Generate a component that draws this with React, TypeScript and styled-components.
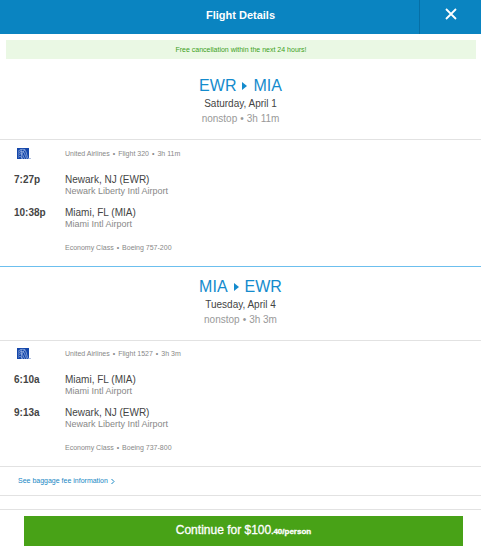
import React from 'react';
import styled, { createGlobalStyle } from 'styled-components';

const GlobalStyle = createGlobalStyle`
  *, *::before, *::after { box-sizing: border-box; }
  body {
    margin: 0;
    background: #fff;
    color: #444;
    font-family: "Liberation Sans", Arial, sans-serif;
  }
  h1, h2, p { margin: 0; font-weight: 400; }
`;

const Header = styled.header`
  display: grid;
  grid-template-columns: 62px 1fr 62px;
  height: 34px;
  background: #0a84c1;
  color: #fff;
`;

const HeaderTitle = styled.h1`
  && { font-weight: 700; }
  grid-column: 2;
  font-size: 11px;
  line-height: 30px;
  text-align: center;
`;

const CloseButton = styled.button`
  display: flex;
  align-items: center;
  justify-content: center;
  padding: 0 0 7px 0;
  border: 0;
  border-left: 1px solid #066fa6;
  background: transparent;
  color: inherit;
  cursor: pointer;
`;

const Notice = styled.p`
  margin: 6px 5px 0 6px;
  background: #eaf8e4;
  color: #3c9f1b;
  font-size: 7px;
  line-height: 19px;
  text-align: center;
`;

const Trip = styled.section<{ $divided?: boolean }>`
  border-top: ${(p) => (p.$divided ? '1px solid #6cbfee' : '0')};
  padding-top: ${(p) => (p.$divided ? '10px' : '17px')};
`;

const Summary = styled.div`
  display: flex;
  flex-direction: column;
  align-items: center;
  height: 64px;
  border-bottom: 1px solid #e2e2e2;
`;

const Route = styled.h2`
  display: flex;
  align-items: center;
  gap: 6px;
  color: #148bcd;
  font-size: 16px;
  line-height: 20px;
`;

const TripDate = styled.p`
  color: #444;
  font-size: 10px;
  line-height: 15px;
`;

const Facts = styled.p`
  display: flex;
  gap: 3px;
`;

const Duration = styled(Facts)`
  color: #999;
  font-size: 10px;
  line-height: 15px;
`;

const Segment = styled.div<{ $compact?: boolean }>`
  display: grid;
  grid-template-columns: 51px 1fr;
  padding: ${(p) => (p.$compact ? '6px' : '7px')} 14px 12px;
`;

const Carrier = styled.div`
  padding: 1px 0 0 3px;
  line-height: 0;
`;

const Detail = styled(Facts)`
  color: #888;
  font-size: 7px;
  line-height: 13px;
`;

const Time = styled.time`
  margin-top: 13px;
  font-size: 10px;
  font-weight: 700;
  line-height: 13px;
`;

const Stop = styled.div`
  margin-top: 13px;
  & + ${Time}, & + ${Time} + & { margin-top: 9px; }
`;

const City = styled.p`
  font-size: 10px;
  line-height: 13px;
`;

const Airport = styled.p`
  color: #888;
  font-size: 9px;
  line-height: 11px;
`;

const Aircraft = styled(Detail)`
  grid-column: 2;
  margin-top: 11px;
`;

const Baggage = styled.div`
  display: flex;
  align-items: center;
  height: 30px;
  padding: 0 18px;
  border-top: 1px solid #e2e2e2;
  border-bottom: 1px solid #e2e2e2;
`;

const BaggageLink = styled.a`
  display: flex;
  align-items: center;
  gap: 3px;
  color: #1787c4;
  font-size: 7px;
  line-height: 12px;
  text-decoration: none;
`;

const Footer = styled.footer`
  margin-top: 13px;
  padding: 6px 18px 5px 24px;
  border-top: 1px solid #e2e2e2;
`;

const ContinueButton = styled.button`
  display: block;
  width: 100%;
  padding: 0;
  border: 0;
  background: #48a217;
  color: #fff;
  font: 400 12px/29px "Liberation Sans", Arial, sans-serif;
  -webkit-text-stroke: 0.3px #fff;
  cursor: pointer;
`;

const Cents = styled.small`
  font-size: 8px;
  font-weight: 700;
`;

const AirlineLogo = () => (
  <svg width="14" height="12" viewBox="0 0 14 12" role="img" aria-label="United Airlines">
    <path d="M0 0h12v11H0z" fill="#1547aa" />
    <g fill="none" stroke="#a9bfe8" strokeWidth="0.7">
      <path d="M1 3.5C4 .5 8 .5 9 4s1 5.500 3 7" />
      <path d="M1 5.500C4 2.500 6.500 3 7.500 5.500S9 9.500 10 11" />
      <path d="M1 7.500C3.500 5 5 5.500 6 7.500S7 10 8 11" />
      <path d="M1 9.500C2.500 8 4 8 5.500 11M4 1l1 10M8 1 5 6" />
    </g>
    <path d="M12.500 10h1v1h-1z" fill="#6d86be" />
  </svg>
);

type Point = { time: string; city: string; airport: string };
type TripData = {
  from: string;
  to: string;
  date: string;
  length: string;
  flight: string;
  aircraft: string;
  stops: Point[];
};

const newark = { city: 'Newark, NJ (EWR)', airport: 'Newark Liberty Intl Airport' };
const miami = { city: 'Miami, FL (MIA)', airport: 'Miami Intl Airport' };

const trips: TripData[] = [
  {
    from: 'EWR', to: 'MIA', date: 'Saturday, April 1', length: '3h 11m',
    flight: 'Flight 320', aircraft: 'Boeing 757-200',
    stops: [{ time: '7:27p', ...newark }, { time: '10:38p', ...miami }],
  },
  {
    from: 'MIA', to: 'EWR', date: 'Tuesday, April 4', length: '3h 3m',
    flight: 'Flight 1527', aircraft: 'Boeing 737-800',
    stops: [{ time: '6:10a', ...miami }, { time: '9:13a', ...newark }],
  },
];

export default function App() {
  return (
    <>
      <GlobalStyle />
      <Header>
        <HeaderTitle>Flight Details</HeaderTitle>
        <CloseButton type="button" aria-label="Close">
          <svg width="12" height="12" viewBox="0 0 12 12" aria-hidden="true">
            <path d="m1 1 10 10m0-10-10 10" stroke="currentColor" strokeWidth="1.800" />
          </svg>
        </CloseButton>
      </Header>
      <main>
        <Notice>Free cancellation within the next 24 hours!</Notice>
        {trips.map((trip, index) => (
          <Trip key={trip.date} $divided={index > 0}>
            <Summary>
              <Route>
                {trip.from}
                <svg width="5" height="8" viewBox="0 0 5 8" role="img" aria-label="to">
                  <path d="m0 0 5 4-5 4z" fill="currentColor" />
                </svg>
                {trip.to}
              </Route>
              <TripDate>{trip.date}</TripDate>
              <Duration>
                <span>nonstop</span><span>•</span><span>{trip.length}</span>
              </Duration>
            </Summary>
            <Segment $compact={index > 0}>
              <Carrier><AirlineLogo /></Carrier>
              <Detail>
                <span>United Airlines</span><span>•</span>
                <span>{trip.flight}</span><span>•</span>
                <span>{trip.length}</span>
              </Detail>
              {trip.stops.map((stop) => (
                <React.Fragment key={stop.time}>
                  <Time>{stop.time}</Time>
                  <Stop>
                    <City>{stop.city}</City>
                    <Airport>{stop.airport}</Airport>
                  </Stop>
                </React.Fragment>
              ))}
              <Aircraft>
                <span>Economy Class</span><span>•</span><span>{trip.aircraft}</span>
              </Aircraft>
            </Segment>
          </Trip>
        ))}
        <Baggage>
          <BaggageLink href="#baggage">
            See baggage fee information
            <svg width="4" height="7" viewBox="0 0 4 7" aria-hidden="true">
              <path d="m.5 1 2.500 2.500L.5 6" fill="none" stroke="currentColor" />
            </svg>
          </BaggageLink>
        </Baggage>
      </main>
      <Footer>
        <ContinueButton type="button">
          Continue for $100<Cents>.40/person</Cents>
        </ContinueButton>
      </Footer>
    </>
  );
}
